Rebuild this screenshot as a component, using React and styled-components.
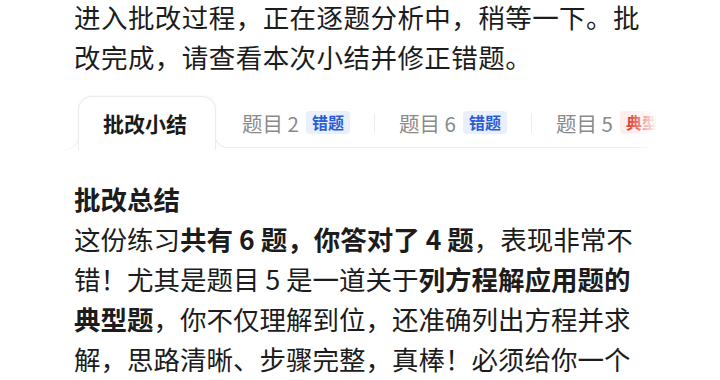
import React from "react";
import styled, { createGlobalStyle } from "styled-components";

const Global = createGlobalStyle`
  html, body { margin: 0; padding: 0; background: #ffffff; }
  body {
    font-family: "Noto Sans CJK SC", "Noto Sans", sans-serif;
    color: #1c1c1c;
    overflow: hidden;
  }
`;

const Page = styled.div`
  width: 720px;
  height: 380px;
  overflow: hidden;
  padding: 0 0 0 74px;
  box-sizing: border-box;
`;

const Inner = styled.div`
  margin-top: -3px;
`;

const Para = styled.p`
  margin: 0;
  width: 574px;
  font-size: 26.5px;
  line-height: ${(p) => (p.$intro ? 39.5 : 40)}px;
  letter-spacing: ${(p) => (p.$intro ? 0.45 : 0)}px;
  line-break: strict;
`;

const TabBar = styled.div`
  display: flex;
  align-items: flex-end;
  margin: 19px 0 0 -12px;
  width: 598px;
  height: 55px;
  position: relative;
  overflow: hidden;
  padding-left: 16px;
  box-sizing: border-box;
  &::after {
    content: "";
    position: absolute;
    right: 0;
    top: 0;
    bottom: 0;
    width: 30px;
    background: linear-gradient(to right, rgba(255,255,255,0), #fff 90%);
  }
`;

const ActiveTab = styled.div`
  position: relative;
  flex: none;
  height: 54px;
  box-sizing: border-box;
  padding: 0 28px 2px 24px;
  display: flex;
  align-items: center;
  font-size: 21px;
  font-weight: 700;
  color: #1a1a1a;
  background: #fff;
  border: 1px solid #ececec;
  border-bottom: none;
  border-radius: 14px 14px 0 0;
  box-shadow: 0 -1px 3px rgba(0, 0, 0, 0.03);
  z-index: 1;
  &::before {
    content: "";
    position: absolute;
    left: -15px;
    bottom: 0;
    width: 14px;
    height: 14px;
    border-right: 1px solid #ececec;
    border-bottom: 1px solid #f6f6f6;
    border-bottom-right-radius: 14px;
  }
`;

const Strip = styled.div`
  flex: none;
  display: flex;
  align-items: center;
  height: 44px;
  padding: 0 0 6px 2px;
  margin-bottom: 2px;
  margin-left: -2px;
  box-sizing: border-box;
  border-bottom: 1px solid #ededed;
  border-left: 1px solid #ededed;
  border-bottom-left-radius: 14px;
  width: 470px;
`;

const Tab = styled.div`
  flex: none;
  display: flex;
  align-items: center;
  gap: 7px;
  padding: 0 24px 0 25px;
  position: relative;
  font-size: 20.5px;
  color: #8a8a8a;
  &:not(:first-child)::before {
    content: "";
    position: absolute;
    left: 0;
    top: 50%;
    height: 20px;
    margin-top: -10px;
    width: 1px;
    background: #ececec;
  }
`;

const Badge = styled.span`
  font-size: 16px;
  font-weight: 700;
  line-height: 23px;
  padding: 0 6px;
  border-radius: 4px;
  color: ${(p) => (p.$tone === "red" ? "#e0463a" : "#2a5bd7")};
  background: ${(p) => (p.$tone === "red" ? "#fdeeee" : "#e8f0fd")};
`;

const B = styled.b`
  font-weight: 700;
`;

const Heading = styled.div`
  font-size: 26.5px;
  font-weight: 700;
  line-height: 40px;
  margin-top: 29px;
`;

export default function App() {
  return (
    <>
      <Global />
      <Page>
        <Inner>
          <Para $intro>
            进入批改过程，正在逐题分析中，稍等一下。批改完成，请查看本次小结并修正错题。
          </Para>
          <TabBar>
            <ActiveTab>批改小结</ActiveTab>
            <Strip>
              <Tab>
                题目 2<Badge>错题</Badge>
              </Tab>
              <Tab>
                题目 6<Badge>错题</Badge>
              </Tab>
              <Tab>
                题目 5<Badge $tone="red">典型</Badge>
              </Tab>
            </Strip>
          </TabBar>
          <Heading>批改总结</Heading>
          <Para>
            这份练习<B>共有 6 题，你答对了 4 题</B>，表现非常不错！尤其是题目 5 是一道关于<B>列方程解应用题的典型题</B>，你不仅理解到位，还准确列出方程并求解，思路清晰、步骤完整，真棒！必须给你一个大大的赞！
          </Para>
        </Inner>
      </Page>
    </>
  );
}
